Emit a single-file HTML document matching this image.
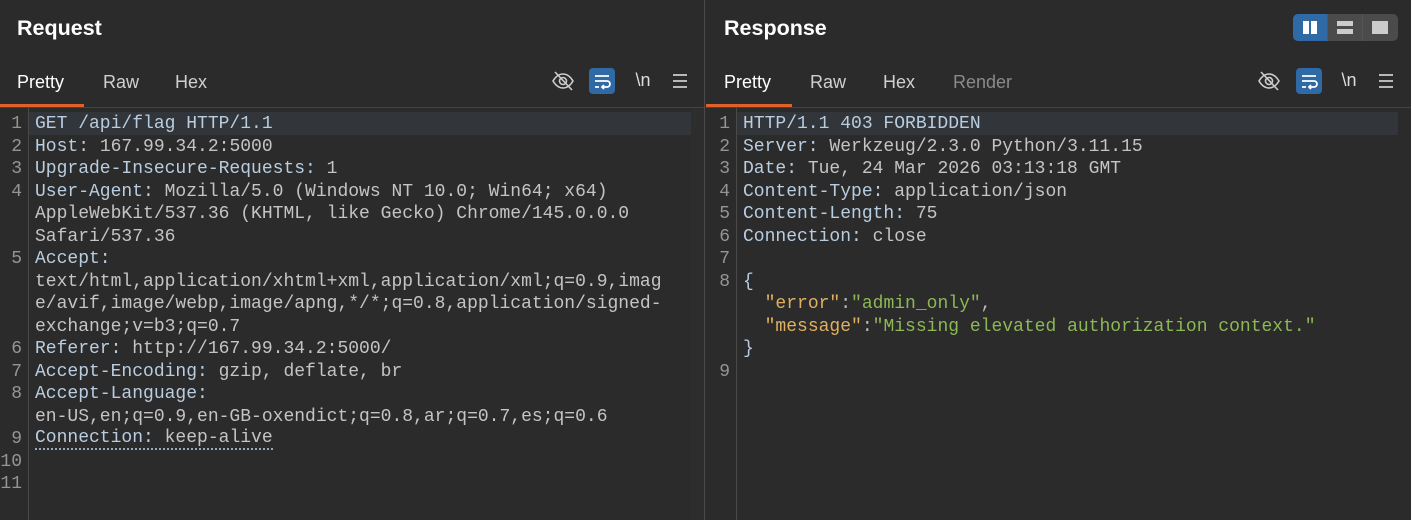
<!DOCTYPE html>
<html><head><meta charset="utf-8"><style>
*{margin:0;padding:0;box-sizing:border-box}
html{overflow:hidden;height:520px}
body{width:1411px;height:520px;background:#2b2b2b;overflow:hidden;font-family:"Liberation Sans",sans-serif;position:relative}
.pane{position:absolute;top:0;height:520px}
.title{position:absolute;top:16px;left:17px;color:#fff;font-weight:bold;font-size:21.5px}
.tabs{position:absolute;top:72px;left:0;font-size:18px;color:#d0d0d0}
.tab{position:absolute;white-space:nowrap}
.ul{position:absolute;top:104px;height:3px;background:#e2602a}
.bline{position:absolute;top:107px;height:1px;background:#444}
.code{position:absolute;top:113px;font-family:"Liberation Mono","Courier New",monospace;font-size:18px;line-height:22.5px}
.row{height:22.5px;position:relative;white-space:pre}
.num{position:absolute;color:#959595;text-align:right;width:22px}
.k{color:#b9cde0}.v{color:#c4c4c4}.s{color:#e0b060}.g{color:#8cb855}.p{color:#bbb}
.gut{position:absolute;top:108px;bottom:0;width:1px;background:#4a4a4a}
.hl{position:absolute;height:22.5px;background:#323539}
.ico{position:absolute;top:68px;width:26px;height:26px}
</style></head><body>
<div class="pane" style="left:0;width:704px">
<div class="title">Request</div>
<div class="tabs"><span class="tab" style="left:17px;color:#fff">Pretty</span><span class="tab" style="left:103px">Raw</span><span class="tab" style="left:175px">Hex</span></div>
<div class="ul" style="left:0;width:84px"></div>
<div class="bline" style="left:0;width:704px"></div>
<div class="hl" style="left:29px;top:112px;width:662px"></div>
<div class="gut" style="left:28px"></div>
<div style="position:absolute;left:691px;top:108px;width:13px;bottom:0;background:#2d2d2d"></div>
</div>
<div style="position:absolute;left:704px;top:0;width:1px;height:520px;background:#4a4a4a"></div>
<svg class="ico" style="left:550px" viewBox="0 0 26 26" fill="none" stroke="#ccc" stroke-width="1.6"><path d="M3 13c3-5 6-7 10-7s7 2 10 7c-3 5-6 7-10 7s-7-2-10-7z"/><circle cx="13" cy="13" r="3.5"/><path d="M5 4l17 18"/></svg>
<div class="ico" style="left:589px;background:#2f6aa6;border-radius:4px"></div>
<svg class="ico" style="left:589px" viewBox="0 0 26 26" fill="none" stroke="#fff" stroke-width="1.8"><path d="M6 8h14M6 13h12a3 3 0 010 6h-5M15 17l-2 2 2 2M6 19h4"/></svg>
<div class="ico" style="left:630px;color:#ddd;font-size:18px;text-align:center;line-height:24px">\n</div>
<svg class="ico" style="left:667px" viewBox="0 0 26 26" stroke="#ccc" stroke-width="1.8"><path d="M6 7h14M6 13h14M6 19h14"/></svg>
<div class="code" style="left:0;width:691px">
<div class="row"><span class="num">1</span><span style="position:absolute;left:35px"><span class="k">GET /api/flag HTTP/1.1</span></span></div>
<div class="row"><span class="num">2</span><span style="position:absolute;left:35px"><span class="k">Host:</span><span class="v"> 167.99.34.2:5000</span></span></div>
<div class="row"><span class="num">3</span><span style="position:absolute;left:35px"><span class="k">Upgrade-Insecure-Requests:</span><span class="v"> 1</span></span></div>
<div class="row"><span class="num">4</span><span style="position:absolute;left:35px"><span class="k">User-Agent:</span><span class="v"> Mozilla/5.0 (Windows NT 10.0; Win64; x64)</span></span></div>
<div class="row"><span style="position:absolute;left:35px" class="v">AppleWebKit/537.36 (KHTML, like Gecko) Chrome/145.0.0.0</span></div>
<div class="row"><span style="position:absolute;left:35px" class="v">Safari/537.36</span></div>
<div class="row"><span class="num">5</span><span style="position:absolute;left:35px" class="k">Accept:</span></div>
<div class="row"><span style="position:absolute;left:35px" class="v">text/html,application/xhtml+xml,application/xml;q=0.9,imag</span></div>
<div class="row"><span style="position:absolute;left:35px" class="v">e/avif,image/webp,image/apng,*/*;q=0.8,application/signed-</span></div>
<div class="row"><span style="position:absolute;left:35px" class="v">exchange;v=b3;q=0.7</span></div>
<div class="row"><span class="num">6</span><span style="position:absolute;left:35px"><span class="k">Referer:</span><span class="v"> http://167.99.34.2:5000/</span></span></div>
<div class="row"><span class="num">7</span><span style="position:absolute;left:35px"><span class="k">Accept-Encoding:</span><span class="v"> gzip, deflate, br</span></span></div>
<div class="row"><span class="num">8</span><span style="position:absolute;left:35px" class="k">Accept-Language:</span></div>
<div class="row"><span style="position:absolute;left:35px" class="v">en-US,en;q=0.9,en-GB-oxendict;q=0.8,ar;q=0.7,es;q=0.6</span></div>
<div class="row"><span class="num">9</span><span style="position:absolute;left:35px;border-bottom:2px dotted #9ab;line-height:20px"><span class="k">Connection:</span><span class="v"> keep-alive</span></span></div>
<div class="row"><span class="num">10</span></div>
<div class="row"><span class="num">11</span></div>
</div>
<div class="title" style="left:724px">Response</div>
<div style="position:absolute;left:1293px;top:14px;width:105px;height:27px;background:#4b4b4b;border-radius:5px"></div>
<div style="position:absolute;left:1293px;top:14px;width:34px;height:27px;background:#2f6aa6;border-radius:5px 0 0 5px"></div>
<div style="position:absolute;left:1303px;top:21px;width:6px;height:13px;background:#fff"></div>
<div style="position:absolute;left:1311px;top:21px;width:6px;height:13px;background:#fff"></div>
<div style="position:absolute;left:1337px;top:21px;width:16px;height:5px;background:#ccc"></div>
<div style="position:absolute;left:1337px;top:29px;width:16px;height:5px;background:#ccc"></div>
<div style="position:absolute;left:1327px;top:14px;width:1px;height:27px;background:#555"></div>
<div style="position:absolute;left:1362px;top:14px;width:1px;height:27px;background:#555"></div>
<div style="position:absolute;left:1372px;top:21px;width:16px;height:13px;background:#ccc"></div>
<div class="tabs" style="left:706px"><span class="tab" style="left:18px;color:#fff">Pretty</span><span class="tab" style="left:104px">Raw</span><span class="tab" style="left:177px">Hex</span><span class="tab" style="left:247px;color:#8a8a8a">Render</span></div>
<div class="ul" style="left:706px;width:86px"></div>
<div class="bline" style="left:705px;width:706px"></div>
<div class="hl" style="left:737px;top:112px;width:661px"></div>
<div class="gut" style="left:736px"></div>
<svg class="ico" style="left:1256px" viewBox="0 0 26 26" fill="none" stroke="#ccc" stroke-width="1.6"><path d="M3 13c3-5 6-7 10-7s7 2 10 7c-3 5-6 7-10 7s-7-2-10-7z"/><circle cx="13" cy="13" r="3.5"/><path d="M5 4l17 18"/></svg>
<div class="ico" style="left:1296px;background:#2f6aa6;border-radius:4px"></div>
<svg class="ico" style="left:1296px" viewBox="0 0 26 26" fill="none" stroke="#fff" stroke-width="1.8"><path d="M6 8h14M6 13h12a3 3 0 010 6h-5M15 17l-2 2 2 2M6 19h4"/></svg>
<div class="ico" style="left:1336px;color:#ddd;font-size:18px;text-align:center;line-height:24px">\n</div>
<svg class="ico" style="left:1373px" viewBox="0 0 26 26" stroke="#ccc" stroke-width="1.8"><path d="M6 7h14M6 13h14M6 19h14"/></svg>
<div class="code" style="left:708px;width:700px">
<div class="row"><span class="num">1</span><span style="position:absolute;left:35px" class="k">HTTP/1.1 403 FORBIDDEN</span></div>
<div class="row"><span class="num">2</span><span style="position:absolute;left:35px"><span class="k">Server:</span><span class="v"> Werkzeug/2.3.0 Python/3.11.15</span></span></div>
<div class="row"><span class="num">3</span><span style="position:absolute;left:35px"><span class="k">Date:</span><span class="v"> Tue, 24 Mar 2026 03:13:18 GMT</span></span></div>
<div class="row"><span class="num">4</span><span style="position:absolute;left:35px"><span class="k">Content-Type:</span><span class="v"> application/json</span></span></div>
<div class="row"><span class="num">5</span><span style="position:absolute;left:35px"><span class="k">Content-Length:</span><span class="v"> 75</span></span></div>
<div class="row"><span class="num">6</span><span style="position:absolute;left:35px"><span class="k">Connection:</span><span class="v"> close</span></span></div>
<div class="row"><span class="num">7</span></div>
<div class="row"><span class="num">8</span><span style="position:absolute;left:35px" class="k">{</span></div>
<div class="row"><span style="position:absolute;left:35px">  <span class="s">"error"</span><span class="p">:</span><span class="g">"admin_only"</span><span class="p">,</span></span></div>
<div class="row"><span style="position:absolute;left:35px">  <span class="s">"message"</span><span class="p">:</span><span class="g">"Missing elevated authorization context."</span></span></div>
<div class="row"><span style="position:absolute;left:35px" class="k">}</span></div>
<div class="row"><span class="num">9</span></div>
</div>
</body></html>
